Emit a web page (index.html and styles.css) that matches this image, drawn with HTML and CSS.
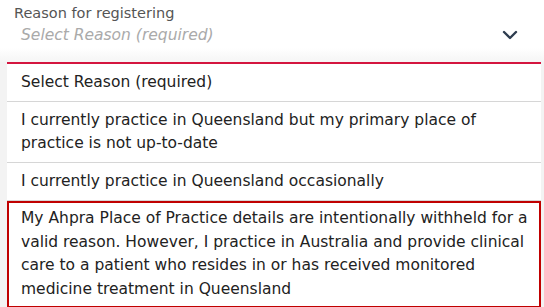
FILE: index.html
```html
<!DOCTYPE html>
<html>
<head>
<meta charset="utf-8">
<link rel="stylesheet" href="styles.css">
</head>
<body>
<div class="field">
  <div class="label">Reason for registering</div>
  <div class="control">
    <span class="placeholder">Select Reason (required)</span>
    <svg class="chevron" width="16" height="10" viewBox="0 0 16 10"><path d="M2 2 L8 8 L14 2" fill="none" stroke="#2e3d4f" stroke-width="2.4" stroke-linecap="round" stroke-linejoin="round"/></svg>
  </div>
</div>
<div class="menu-wrap">
  <ul class="menu">
    <li class="option">Select Reason (required)</li>
    <li class="option">I currently practice in Queensland but my primary place of practice is not up-to-date</li>
    <li class="option">I currently practice in Queensland occasionally</li>
    <li class="option active">My Ahpra Place of Practice details are intentionally withheld for a valid reason. However, I practice in Australia and provide clinical care to a patient who resides in or has received monitored medicine treatment in Queensland</li>
  </ul>
</div>
</body>
</html>
```
FILE: styles.css
```css
html, body {
  margin: 0;
  padding: 0;
  background: #ffffff;
  font-family: "DejaVu Sans", Verdana, sans-serif;
  width: 544px;
  height: 307px;
  overflow: hidden;
}
.field {
  padding: 4px 0 0 14px;
  background: linear-gradient(#ffffff 0, #ffffff 48px, #f5f5f5 62px);
  height: 58px;
}
.label {
  font-size: 14.5px;
  color: #555555;
  line-height: 18px;
}
.control {
  display: flex;
  align-items: center;
  justify-content: space-between;
  padding: 0 26px 0 7px;
  height: 26px;
}
.placeholder {
  font-style: italic;
  color: #aaaaaa;
  font-size: 15.5px;
}
.chevron {
  display: block;
  margin-top: -1px;
}
.menu-wrap {
  background: #f3f3f3;
  padding: 0 3px 0 7px;
  height: 245px;
}
.menu {
  list-style: none;
  margin: 0;
  padding: 0;
  background: #ffffff;
  border-top: 2px solid #d4153f;
  font-size: 15.5px;
  color: #222222;
}
.option {
  padding: 7px 6px 7px 14px;
  line-height: 23px;
  border-bottom: 1px solid #d6d6d6;
}
.option.active {
  border: 2px solid #c00000;
  padding: 4px 4px 5px 12px;
  line-height: 23.5px;
}
```
